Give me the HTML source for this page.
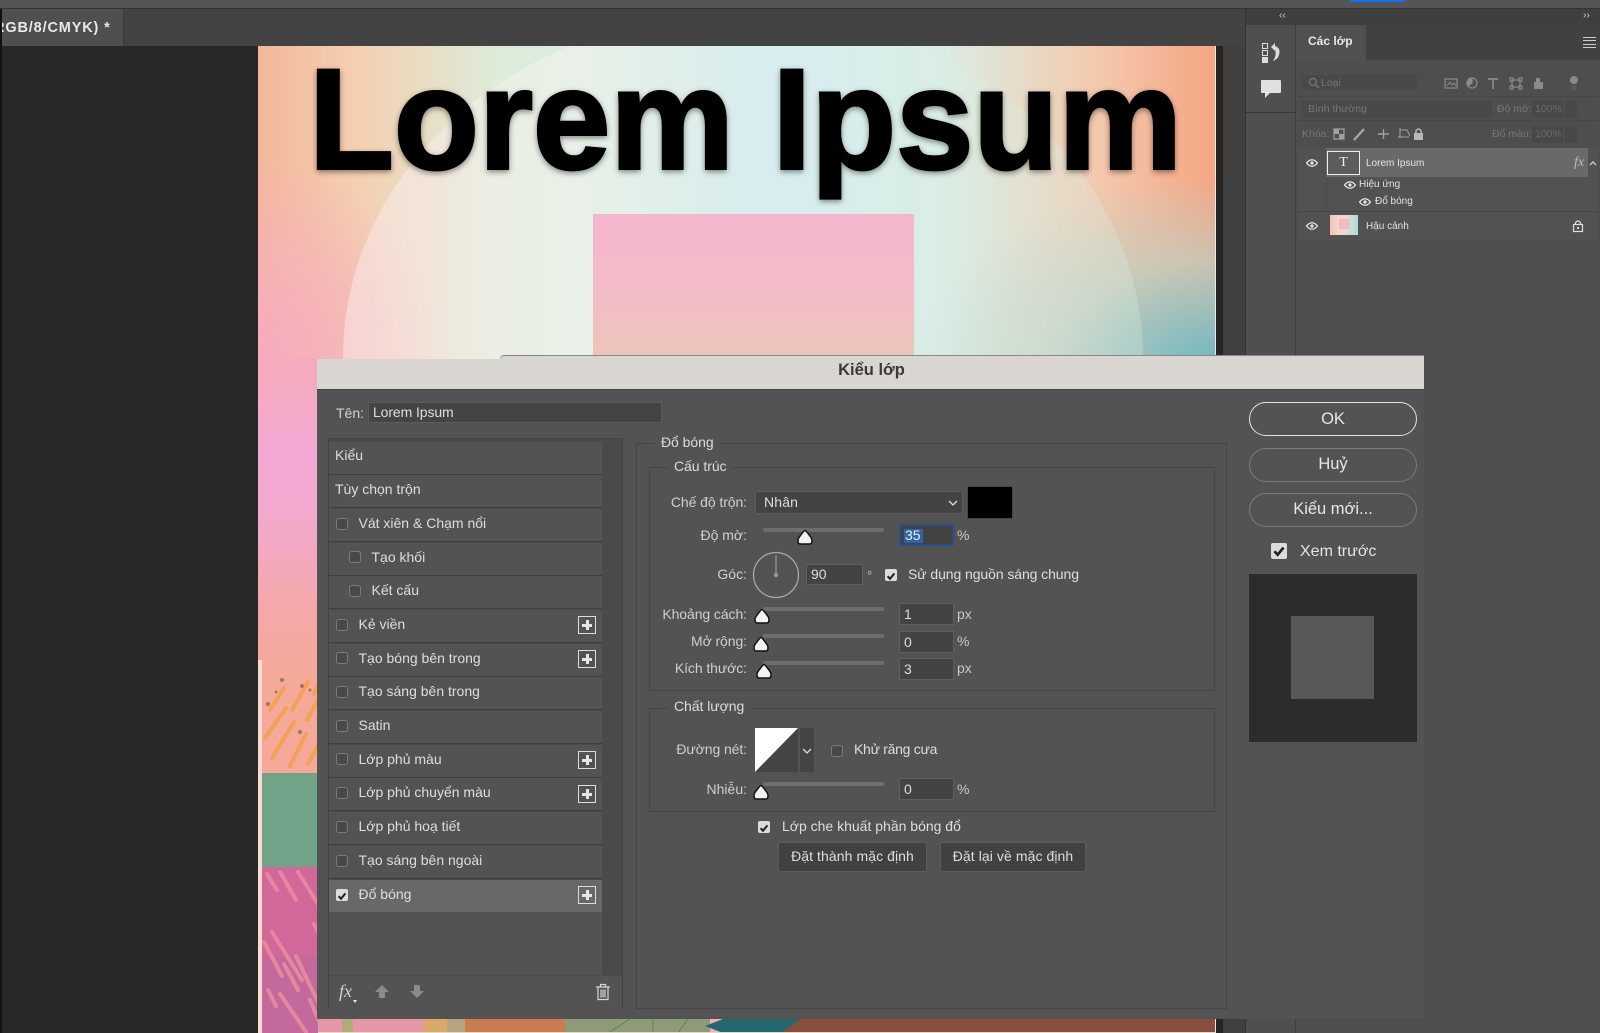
<!DOCTYPE html>
<html lang="vi"><head><meta charset="utf-8"><title>Kiểu lớp</title>
<style>
html,body{margin:0;padding:0;background:#282828}
#r{position:relative;width:1600px;height:1033px;overflow:hidden;background:#282828;font-family:"Liberation Sans","Noto Sans CJK SC",sans-serif;font-size:14px;color:#dedede;filter:blur(.3px)}
#r div,#r span,#r svg.a{position:absolute}
.t{white-space:nowrap;line-height:20px;height:20px;letter-spacing:0}
.rt{text-align:right;width:130px;left:617px;color:#cfcfcf}
.row{left:329px;width:273px;height:32px;background:#535353;box-shadow:0 1px 0 #3f3f3f}
.cb{width:10px;height:10px;border:1px solid #7b7b7b;border-radius:3px;background:#484848}
.ck{width:12px;height:12px;border-radius:2px;background:#dcdcdc}
.pl{left:578px;width:16px;height:16px;border:1.5px solid #dcdcdc}
.pl:before{content:"";position:absolute;left:3px;top:6.5px;width:10px;height:3px;background:#e6e6e6}
.pl:after{content:"";position:absolute;left:6.5px;top:3px;width:3px;height:10px;background:#e6e6e6}
.gb{border:1px solid #464646;box-sizing:border-box}
.lg{background:#535353;padding:0 6px;line-height:20px;height:20px;white-space:nowrap;color:#dcdcdc;letter-spacing:-.05px}
.sl{left:763px;width:121px;height:4px;background:#6e6e6e;border-radius:2px}
.in{left:899px;width:55px;height:22px;background:#434343;box-sizing:border-box;border:1px solid #5f5f5f;padding-left:4px;line-height:20px}
.btn{left:1249px;width:168px;height:34px;box-sizing:border-box;border:1px solid #7b7b7b;border-radius:17px;text-align:center;font-size:16.5px;line-height:31px;color:#e6e6e6}
.b2{height:30px;box-sizing:border-box;background:#414141;border:1px solid #5c5c5c;border-radius:2px;text-align:center;line-height:27px;letter-spacing:.08px;color:#dedede}
.d{color:#767676;font-size:10.5px;line-height:16px;height:16px;white-space:nowrap}
.l{font-size:10px;line-height:16px;height:16px;white-space:nowrap;color:#e4e4e4}
</style></head><body><div id="r">
<svg width="0" height="0" style="position:absolute"><defs>
<symbol id="th" viewBox="0 0 16 16"><path d="M8 1.500 Q9 1.500 14 8.500 Q15 10 15 12 Q15 15 12.500 15 H3.500 Q1 15 1 12 Q1 10 2 8.500 Q7 1.500 8 1.500 Z" fill="#f2f2f2" stroke="#111" stroke-width="1.500"/></symbol>
<symbol id="ch" viewBox="0 0 12 12"><path d="M2.600 6.200 L5 8.800 L9.400 3.400" fill="none" stroke="#222" stroke-width="2"/></symbol>
<symbol id="ey" viewBox="0 0 12 8"><path d="M.5 4 Q6 -2.500 11.500 4 Q6 10.500 .5 4 Z" fill="none" stroke="#e8e8e8" stroke-width="1.300"/><circle cx="6" cy="4" r="1.600" fill="#e8e8e8"/></symbol>
</defs></svg>

<!-- top chrome -->
<div style="left:0;top:0;width:1600px;height:8px;background:#555"></div>
<div style="left:1350px;top:0;width:55px;height:2px;background:#1473e6;border-radius:0 0 5px 5px"></div>
<div style="left:0;top:8px;width:1600px;height:1px;background:#333"></div>
<div style="left:2px;top:9px;width:1243px;height:37px;background:#434343"></div>
<div style="left:2px;top:9px;width:121px;height:37px;background:#4f4f4f;overflow:hidden;box-shadow:1px 0 0 #3a3a3a"><div class="t" style="left:-8px;top:9px;font-weight:bold;font-size:14.500px;color:#e8e8e8;letter-spacing:.85px">RGB/8/CMYK) *</div></div>
<div style="left:0;top:9px;width:2px;height:1024px;background:#111"></div>

<!-- canvas -->
<div style="left:258px;top:46px;width:957px;height:987px;overflow:hidden;background:#f5b0b8">
<div style="left:0;top:0;width:957px;height:320px;background:linear-gradient(90deg,#f3b79a 0,#f5cfb0 10%,#ddecd9 25%,#d7edf0 55%,#dbece2 72%,#f3cbb0 87%,#f5a583 100%)"></div>
<div style="left:0;top:0;width:957px;height:320px;background:radial-gradient(ellipse 190px 210px at 0 100%,rgba(245,170,190,1),rgba(245,175,190,.65) 50%,rgba(245,190,190,0) 100%)"></div>
<div style="left:600px;top:120px;width:357px;height:200px;background:radial-gradient(ellipse 300px 190px at 100% 100%,rgba(110,185,195,1),rgba(180,210,200,.65) 55%,rgba(210,220,200,0) 100%)"></div>
<div style="left:85px;top:-34px;width:800px;height:690px;border-radius:50%;background:linear-gradient(90deg,rgba(250,232,232,.55),rgba(245,245,240,.5) 30%,rgba(215,237,240,.25) 50%,rgba(215,240,235,.3) 75%,rgba(215,235,225,.3))"></div>
<div style="left:335px;top:168px;width:321px;height:150px;background:linear-gradient(180deg,#f3b6cc,#f3bcc8 50%,#ecc6ba)"></div>
<div style="left:0;top:312px;width:63px;height:302px;background:linear-gradient(180deg,#f6abbc 0,#f2a8d2 30%,#f1a9cf 50%,#f5a8a8 85%,#f5a89c 100%)"></div>
<div style="left:0;top:614px;width:4px;height:373px;background:#f6dcd2"></div>
<svg class="a" style="left:4px;top:614px" width="60" height="406" viewBox="0 0 60 406">
<rect y="0" width="60" height="113" fill="#f4a99a"/>
<g stroke="#f5a04e" stroke-width="4" stroke-linecap="round" opacity=".9"><path d="M8 50 L22 28M3 78 L24 48M30 50 L46 22M10 98 L32 62M28 106 L44 74M45 60 L58 36M46 104 L60 78M52 34 L58 22"/></g>
<g fill="#9a7a5a"><circle cx="20" cy="20" r="2"/><circle cx="40" cy="26" r="2"/><circle cx="6" cy="44" r="2"/><circle cx="38" cy="72" r="2"/><circle cx="48" cy="30" r="1.500"/><circle cx="14" cy="32" r="1.500"/></g>
<rect y="113" width="60" height="94" fill="#70a387"/>
<rect y="207" width="60" height="199" fill="#c4699c"/>
<rect y="207" width="60" height="90" fill="#d8689a" opacity=".7"/>
<g stroke="#e5889f" stroke-width="4" stroke-linecap="round"><path d="M5 214 L15 230M18 212 L34 240M36 212 L56 244M52 264 L58 276M10 272 L40 320M2 282 L20 316M22 304 L36 330M34 296 L56 342M6 330 L14 346M18 334 L44 372M48 340 L58 364"/></g>
</svg>
<svg class="a" style="left:60px;top:973px" width="897" height="14" viewBox="60 0 897 14">
<rect x="525" width="432" height="14" fill="#8a4f3c"/>
<rect x="60" width="147" height="14" fill="#e596a8"/><rect x="84" width="11" height="14" fill="#b0ac78"/>
<rect x="165" width="24" height="14" fill="#dba86c"/><rect x="189" width="18" height="14" fill="#b5a583"/>
<rect x="207" width="100" height="14" fill="#c97c50"/><rect x="307" width="145" height="14" fill="#8e9a78"/>
<path d="M447 7 L465 0 H543 L523 14 H465 Z" fill="#23686f"/>
<path d="M350 14 L372 0M395 14 V0M420 14 L430 0" stroke="#5f8450" fill="none"/>
<rect x="60" y="13" width="897" height="1" fill="#e0d8c8"/>
</svg>
<svg class="a" style="left:0;top:0" width="957" height="180" viewBox="0 0 957 180"><text x="51" y="122.500" font-family="Liberation Sans" font-weight="bold" font-size="143" textLength="873" lengthAdjust="spacingAndGlyphs" fill="#000" stroke="#000" stroke-width="3" style="filter:drop-shadow(0 2px 3px rgba(0,0,0,.45))">Lorem Ipsum</text></svg>
</div>

<!-- right side dark / panels -->
<div style="left:1215px;top:46px;width:1px;height:987px;background:#e8e8e8"></div>
<div style="left:1216px;top:46px;width:7px;height:987px;background:#262626"></div>
<div style="left:1223px;top:46px;width:22px;height:987px;background:#404040"></div>
<div style="left:1245px;top:9px;width:1px;height:1024px;background:#333"></div>
<div style="left:1246px;top:9px;width:354px;height:16px;background:#3f3f3f"></div>
<div class="t" style="left:1279px;top:6px;font-size:10px;color:#d0d0d0">‹‹</div>
<div class="t" style="left:1583px;top:6px;font-size:10px;color:#d0d0d0">››</div>
<div style="left:1246px;top:25px;width:49px;height:1008px;background:#4f4f4f"></div>
<div style="left:1246px;top:112px;width:49px;height:1px;background:#383838"></div>
<div style="left:1295px;top:25px;width:1px;height:1008px;background:#3d3d3d"></div>
<div style="left:1296px;top:25px;width:304px;height:1008px;background:#4e4e4e"></div>
<svg class="a" style="left:1260px;top:40px" width="24" height="26" viewBox="0 0 24 26"><rect x="2.500" y="3.500" width="5" height="5" fill="none" stroke="#ddd"/><rect x="2.500" y="10.500" width="5" height="5" fill="none" stroke="#ddd"/><rect x="2" y="17" width="6" height="6" fill="#ddd"/><path d="M11 7 L15 3 L15 6 Q21 8 19 15 Q18 19 13 21 Q17 15 15 9 L15 11 Z" fill="#ddd"/></svg>
<svg class="a" style="left:1260px;top:79px" width="22" height="22" viewBox="0 0 22 22"><path d="M2 1 H20 Q21 1 21 2 V13 Q21 14 20 14 H10 L5 19 V14 H2 Q1 14 1 13 V2 Q1 1 2 1 Z" fill="#e0e0e0"/></svg>

<!-- layers panel -->
<div style="left:1296px;top:25px;width:304px;height:35px;background:#414141"></div>
<div style="left:1296px;top:25px;width:70px;height:35px;background:#505050"></div>
<div class="t" style="left:1308px;top:31px;font-size:12px;font-weight:bold;color:#e8e8e8">Các lớp</div>
<div style="left:1583px;top:37px;width:13px;height:9px;border-top:1px solid #ccc;border-bottom:1px solid #ccc"></div><div style="left:1583px;top:40px;width:13px;height:3px;border-top:1px solid #ccc;border-bottom:1px solid #ccc"></div>
<div style="left:1302px;top:75px;width:115px;height:15px;background:#494949"></div>
<div class="d" style="left:1321px;top:75px">Loại</div>
<svg class="a" style="left:1308px;top:77px" width="12" height="12" viewBox="0 0 12 12"><circle cx="5" cy="5" r="3.500" fill="none" stroke="#767676" stroke-width="1.300"/><path d="M8 8 L11 11" stroke="#767676" stroke-width="1.300"/></svg>
<svg class="a" style="left:1444px;top:74px" width="145" height="20" viewBox="0 0 145 20" fill="none" stroke="#8a8a8a" stroke-width="1.200"><rect x="1" y="5" width="12" height="9"/><path d="M3 12 L6 8 L8 11 L10 9 L12 12" stroke-width="1"/><circle cx="28" cy="9" r="5"/><path d="M28 4 A5 5 0 0 0 24 12 L28 9 Z" fill="#8a8a8a"/><path d="M44 5 H54 M49 5 V15" stroke-width="1.700"/><rect x="68" y="6" width="8" height="7"/><rect x="66" y="4" width="3" height="3"/><rect x="75" y="4" width="3" height="3"/><rect x="66" y="12" width="3" height="3"/><rect x="75" y="12" width="3" height="3"/><path d="M92 4 H96 V8 H99 V15 H90 V8 H92" fill="#8a8a8a" stroke="none"/><circle cx="130" cy="6" r="4" fill="#8a8a8a" stroke="none"/><circle cx="130" cy="14" r="3" fill="#5a5a5a" stroke="none"/></svg>
<div style="left:1298px;top:96px;width:300px;height:1px;background:#474747"></div>
<div style="left:1302px;top:101px;width:190px;height:17px;background:#494949"></div>
<div class="d" style="left:1308px;top:101px">Bình thường</div>
<div class="d" style="left:1497px;top:101px">Độ mờ:</div>
<div style="left:1532px;top:101px;width:31px;height:17px;background:#484848"></div><div class="d" style="left:1535px;top:101px;color:#6a6a6a">100%</div>
<div style="left:1565px;top:101px;width:12px;height:17px;background:#484848"></div>
<div style="left:1298px;top:120px;width:300px;height:1px;background:#474747"></div>
<div class="d" style="left:1302px;top:126px">Khóa:</div>
<svg class="a" style="left:1332px;top:126px" width="100" height="16" viewBox="0 0 100 16"><rect x="2" y="3" width="10" height="10" fill="none" stroke="#a0a0a0" stroke-width="1.200"/><rect x="2" y="3" width="5" height="5" fill="#a0a0a0"/><rect x="7" y="8" width="5" height="5" fill="#a0a0a0"/><path d="M22 14 L32 3" stroke="#a8a8a8" stroke-width="2.200"/><path d="M46 8 H57 M51.500 3 V13" stroke="#a0a0a0" stroke-width="1.400"/><path d="M66 11 H77 M68 4 H75 L78 10 M68 2 V12" stroke="#a0a0a0" fill="none" stroke-width="1"/><rect x="82" y="7" width="9" height="7" fill="#b8b8b8"/><path d="M84 7 V4.500 Q86.500 1.500 89 4.500 V7" stroke="#b8b8b8" fill="none" stroke-width="1.400"/></svg>
<div class="d" style="left:1492px;top:126px">Đổ màu:</div>
<div style="left:1532px;top:126px;width:31px;height:17px;background:#484848"></div><div class="d" style="left:1535px;top:126px;color:#6a6a6a">100%</div>
<div style="left:1565px;top:126px;width:12px;height:17px;background:#484848"></div>
<div style="left:1298px;top:148px;width:300px;height:92px;background:#525252"></div>
<div style="left:1298px;top:148px;width:290px;height:29px;background:#696969"></div>
<div style="left:1298px;top:148px;width:28px;height:29px;background:#525252"></div>
<div style="left:1327px;top:151px;width:31px;height:22px;border:1px solid #eee;background:#5c5c5c;text-align:center;line-height:21px;font-family:'Liberation Serif',serif;font-size:14px;color:#eee">T</div>
<svg class="a" style="left:1306px;top:159px" width="12" height="8"><use href="#ey"/></svg>
<div class="l" style="left:1366px;top:156px">Lorem Ipsum</div>
<div class="t" style="left:1574px;top:153px;font-family:'Liberation Serif',serif;font-style:italic;font-size:14px;color:#bbb">fx</div>
<svg class="a" style="left:1589px;top:160px" width="8" height="6"><path d="M1 5 L4 2 L7 5" fill="none" stroke="#ddd" stroke-width="1.200"/></svg>
<div style="left:1326px;top:177px;width:1px;height:34px;background:#474747"></div>
<svg class="a" style="left:1344px;top:181px" width="12" height="8"><use href="#ey"/></svg>
<div class="l" style="left:1359px;top:177px">Hiệu ứng</div>
<svg class="a" style="left:1359px;top:198px" width="12" height="8"><use href="#ey"/></svg>
<div class="l" style="left:1375px;top:194px">Đổ bóng</div>
<div style="left:1298px;top:211px;width:300px;height:1px;background:#454545"></div>
<svg class="a" style="left:1306px;top:222px" width="12" height="8"><use href="#ey"/></svg>
<div style="left:1330px;top:215px;width:28px;height:20px;background:linear-gradient(90deg,#f5c3ae,#f0d8d0 30%,#e8d8c8 60%,#a8dde0)"></div>
<div style="left:1339px;top:219px;width:10px;height:10px;background:#f1b8c6"></div>
<div class="l" style="left:1366px;top:219px">Hậu cảnh</div>
<svg class="a" style="left:1572px;top:219px" width="12" height="14" viewBox="0 0 12 14"><rect x="1.500" y="5.500" width="9" height="7" fill="none" stroke="#ddd" stroke-width="1.200"/><path d="M3.500 5 V3.500 Q6 .5 8.500 3.500 V5" fill="none" stroke="#ddd" stroke-width="1.200"/><rect x="5" y="8" width="2" height="2" fill="#ddd"/></svg>

<!-- dialog -->
<div style="left:500px;top:356px;width:924px;height:4px;background:#d9d5d1;border-radius:6px 0 0 0;box-shadow:0 -1px 0 #888"></div>
<div style="left:317px;top:359px;width:1107px;height:30px;background:#d9d5d1"></div>
<div class="t" style="left:318px;top:360px;width:1107px;text-align:center;font-weight:bold;font-size:16.500px;line-height:20px;color:#3a3a3a">Kiểu lớp</div>
<div style="left:317px;top:389px;width:1107px;height:630px;background:#535353;box-shadow:inset 0 1px 0 #444"></div>

<div class="t" style="left:336px;top:403px;color:#d2d2d2">Tên:</div>
<div style="left:368px;top:402px;width:294px;height:21px;background:#444;box-sizing:border-box;border:1px solid #5c5c5c;padding-left:4px;line-height:19px;letter-spacing:-.1px">Lorem Ipsum</div>

<div class="gb" style="left:328px;top:438px;width:295px;height:570px;background:#4a4a4a;border-color:#434343"></div>
<div class="row" style="top:442px"></div><div class="t" style="left:335px;top:445px">Kiểu</div>
<div class="row" style="top:475px"></div><div class="t" style="left:335px;top:479px">Tùy chọn trộn</div>
<div class="row" style="top:509px"></div><div class="cb" style="left:336px;top:518px"></div><div class="t" style="left:358.500px;top:513px">Vát xiên &amp; Chạm nổi</div>
<div class="row" style="top:543px"></div><div class="cb" style="left:349px;top:551px"></div><div class="t" style="left:371.500px;top:547px">Tạo khối</div>
<div class="row" style="top:576px"></div><div class="cb" style="left:349px;top:585px"></div><div class="t" style="left:371.500px;top:580px">Kết cấu</div>
<div class="row" style="top:610px"></div><div class="cb" style="left:336px;top:619px"></div><div class="t" style="left:358.500px;top:614px">Kẻ viền</div><div class="pl" style="top:616px"></div>
<div class="row" style="top:644px"></div><div class="cb" style="left:336px;top:652px"></div><div class="t" style="left:358.500px;top:648px">Tạo bóng bên trong</div><div class="pl" style="top:650px"></div>
<div class="row" style="top:677px"></div><div class="cb" style="left:336px;top:686px"></div><div class="t" style="left:358.500px;top:681px">Tạo sáng bên trong</div>
<div class="row" style="top:711px"></div><div class="cb" style="left:336px;top:720px"></div><div class="t" style="left:358.500px;top:715px">Satin</div>
<div class="row" style="top:745px"></div><div class="cb" style="left:336px;top:753px"></div><div class="t" style="left:358.500px;top:749px">Lớp phủ màu</div><div class="pl" style="top:751px"></div>
<div class="row" style="top:778px"></div><div class="cb" style="left:336px;top:787px"></div><div class="t" style="left:358.500px;top:782px">Lớp phủ chuyển màu</div><div class="pl" style="top:785px"></div>
<div class="row" style="top:812px"></div><div class="cb" style="left:336px;top:821px"></div><div class="t" style="left:358.500px;top:816px">Lớp phủ hoạ tiết</div>
<div class="row" style="top:846px"></div><div class="cb" style="left:336px;top:855px"></div><div class="t" style="left:358.500px;top:850px">Tạo sáng bên ngoài</div>
<div class="row" style="top:880px;background:#686868;box-shadow:none"></div><div class="ck" style="left:336px;top:889px"><svg width="12" height="12"><use href="#ch"/></svg></div><div class="t" style="left:358.500px;top:884px">Đổ bóng</div><div class="pl" style="top:886px"></div>
<div style="left:329px;top:912px;width:273px;height:64px;background:#535353"></div>
<div style="left:329px;top:975px;width:293px;height:32px;background:#535353;border-top:1px solid #4b4b4b"></div>
<div class="t" style="left:339px;top:981px;font-family:'Liberation Serif',serif;font-style:italic;font-size:18px;color:#d0d0d0">fx</div>
<div style="left:353px;top:1000px;width:0;height:0;border:2px solid transparent;border-top:3px solid #e8e8e8"></div>
<svg class="a" style="left:374px;top:983px" width="50" height="18" viewBox="0 0 50 18"><path d="M8 2 L15 9 H11 V15 H5 V9 H1 Z" fill="#8b8b8b"/><path d="M40 2 H46 V8 H50 L43 15 L36 8 H40 Z" fill="#8b8b8b"/></svg>
<svg class="a" style="left:595px;top:983px" width="16" height="18" viewBox="0 0 16 18" fill="none" stroke="#d6d6d6" stroke-width="1.200"><path d="M1 4 H15 M5.500 4 V1.500 H10.500 V4 M3 4 V16.500 H13 V4 M6 6.500 V14.500 M8 6.500 V14.500 M10 6.500 V14.500"/></svg>

<!-- groups -->
<div class="gb" style="left:636px;top:443px;width:591px;height:566px"></div>
<div class="lg" style="left:655px;top:432px">Đổ bóng</div>
<div class="gb" style="left:649px;top:467px;width:566px;height:224px"></div>
<div class="lg" style="left:668px;top:456px">Cấu trúc</div>

<div class="t rt" style="top:492px;letter-spacing:-.08px">Chế độ trộn:</div>
<div style="left:755px;top:491px;width:208px;height:23px;background:#434343;box-sizing:border-box;border:1px solid #5d5d5d;border-radius:3px;padding-left:8px;line-height:21px;letter-spacing:.15px">Nhân</div>
<svg class="a" style="left:948px;top:499px" width="10" height="8"><path d="M1 2 L5 6 L9 2" fill="none" stroke="#ddd" stroke-width="1.300"/></svg>
<div style="left:968px;top:487px;width:44px;height:31px;background:#000;box-shadow:0 0 0 1px #474747"></div>

<div class="t rt" style="top:525px">Độ mờ:</div>
<div class="sl" style="top:528px"></div>
<svg class="a" style="left:797px;top:529px" width="16" height="16"><use href="#th"/></svg>
<div class="in" style="top:524px;border:2px solid #27508a;padding-left:3px;line-height:18px;color:#fff"><span style="left:3px;top:3px;width:19px;height:14px;background:#2d62ad"></span><span style="left:4px;top:0;line-height:18px;color:#f0f0f0">35</span></div>
<div class="t" style="left:957px;top:525px;color:#c8c8c8">%</div>

<div class="t rt" style="top:564px">Góc:</div>
<svg class="a" style="left:752px;top:551px" width="48" height="48" viewBox="0 0 48 48"><circle cx="24" cy="24" r="22.500" fill="none" stroke="#aaa" stroke-width="1.200"/><path d="M24 24 V4" stroke="#999" stroke-width="1.200"/><circle cx="24" cy="24" r="2.200" fill="#999"/></svg>
<div class="in" style="left:806px;width:57px;top:564px;height:21px;line-height:19px">90</div>
<div class="t" style="left:867px;top:566px;font-size:13px;color:#bbb">°</div>
<div class="ck" style="left:885px;top:569px"><svg width="12" height="12"><use href="#ch"/></svg></div>
<div class="t" style="left:908px;top:564px;letter-spacing:-.08px">Sử dụng nguồn sáng chung</div>

<div class="t rt" style="top:604px;letter-spacing:-.08px">Khoảng cách:</div>
<div class="sl" style="top:607px"></div>
<svg class="a" style="left:754px;top:608px" width="16" height="16"><use href="#th"/></svg>
<div class="in" style="top:603px">1</div><div class="t" style="left:957px;top:604px;color:#c8c8c8">px</div>

<div class="t rt" style="top:631px;letter-spacing:-.08px">Mở rộng:</div>
<div class="sl" style="top:634px"></div>
<svg class="a" style="left:753px;top:636px" width="16" height="16"><use href="#th"/></svg>
<div class="in" style="top:631px">0</div><div class="t" style="left:957px;top:631px;color:#c8c8c8">%</div>

<div class="t rt" style="top:658px;letter-spacing:-.08px">Kích thước:</div>
<div class="sl" style="top:661px"></div>
<svg class="a" style="left:756px;top:663px" width="16" height="16"><use href="#th"/></svg>
<div class="in" style="top:658px">3</div><div class="t" style="left:957px;top:658px;color:#c8c8c8">px</div>

<div class="gb" style="left:649px;top:708px;width:566px;height:104px"></div>
<div class="lg" style="left:668px;top:696px">Chất lượng</div>
<div class="t rt" style="top:739px;letter-spacing:-.08px">Đường nét:</div>
<svg class="a" style="left:755px;top:728px" width="43" height="44" viewBox="0 0 43 44"><rect width="43" height="44" fill="#444"/><path d="M0 44 L43 0 H0 Z" fill="#fff"/></svg>
<div style="left:800px;top:728px;width:14px;height:44px;background:#444"></div>
<svg class="a" style="left:802px;top:747px" width="10" height="8"><path d="M1 2 L5 6 L9 2" fill="none" stroke="#ddd" stroke-width="1.300"/></svg>
<div class="cb" style="left:831px;top:745px"></div>
<div class="t" style="left:854px;top:739px;letter-spacing:-.28px">Khử răng cưa</div>

<div class="t rt" style="top:779px">Nhiễu:</div>
<div class="sl" style="top:782px"></div>
<svg class="a" style="left:753px;top:784px" width="16" height="16"><use href="#th"/></svg>
<div class="in" style="top:778px">0</div><div class="t" style="left:957px;top:779px;color:#c8c8c8">%</div>

<div class="ck" style="left:758px;top:821px"><svg width="12" height="12"><use href="#ch"/></svg></div>
<div class="t" style="left:782px;top:816px">Lớp che khuất phần bóng đổ</div>
<div class="b2" style="left:778px;top:842px;width:149px">Đặt thành mặc định</div>
<div class="b2" style="left:940px;top:842px;width:146px">Đặt lại về mặc định</div>

<!-- right buttons -->
<div class="btn" style="top:402px;border:1.500px solid #e4e4e4;line-height:32px">OK</div>
<div class="btn" style="top:448px">Huỷ</div>
<div class="btn" style="top:493px">Kiểu mới...</div>
<div class="ck" style="left:1271px;top:543px;width:16px;height:16px"><svg width="16" height="16" viewBox="0 0 12 12"><use href="#ch"/></svg></div>
<div class="t" style="left:1300px;top:542px;font-size:16px;color:#e4e4e4">Xem trước</div>
<div style="left:1249px;top:574px;width:168px;height:168px;background:#2c2c2c"></div>
<div style="left:1291px;top:616px;width:83px;height:83px;background:#585858"></div>
</div></body></html>
